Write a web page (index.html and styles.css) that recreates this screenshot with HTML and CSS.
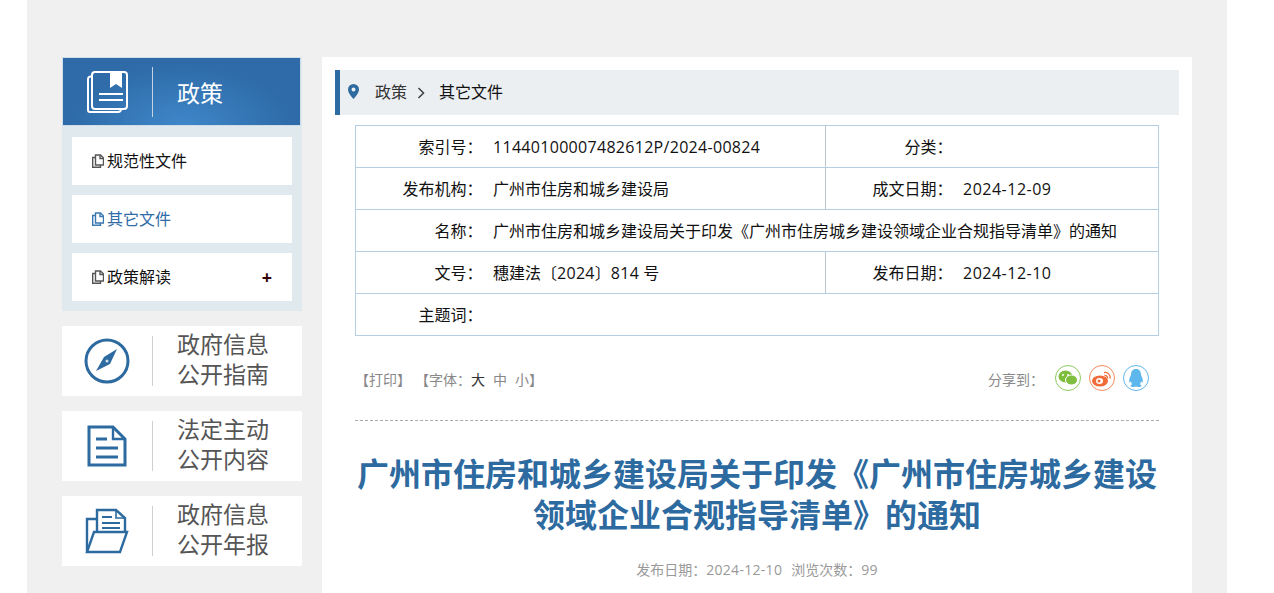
FILE: index.html
```html
<!DOCTYPE html>
<html lang="zh-CN">
<head>
<meta charset="utf-8">
<title>政策</title>
<link rel="stylesheet" href="styles.css">
</head>
<body>
<div class="wrap">
  <aside class="side">
    <div class="menu">
      <div class="menu-head">
        <svg class="head-icon" width="42" height="42" viewBox="0 0 42 42" fill="none" stroke="#fff" stroke-width="2">
          <rect x="5" y="1" width="35" height="37" rx="3"/>
          <path d="M5 5.500H3.500A2.500 2.500 0 0 0 1 8v31a2 2 0 0 0 2 2h28a3 3 0 0 0 3-3"/>
          <path d="M23 1v16l6-4 6 4V1z" fill="#fff" stroke="none"/>
          <path d="M12 23h24M12 29h24"/>
        </svg>
        <span class="vline light"></span>
        <span class="head-title">政策</span>
      </div>
      <ul class="menu-list">
        <li class="menu-item"><svg class="doc" width="12" height="14" viewBox="0 0 12 14"><use href="#doc"/></svg>规范性文件</li>
        <li class="menu-item on"><svg class="doc" width="12" height="14" viewBox="0 0 12 14"><use href="#doc"/></svg>其它文件</li>
        <li class="menu-item"><svg class="doc" width="12" height="14" viewBox="0 0 12 14"><use href="#doc"/></svg>政策解读<b class="plus">+</b></li>
      </ul>
    </div>
    <a class="card">
      <span class="card-icon">
        <svg width="46" height="46" viewBox="0 0 46 46" fill="none"><circle cx="23" cy="23" r="21" stroke="#2d6a9f" stroke-width="3"/><path d="M33 11 26 26 12 33 20 19z" fill="#2d6a9f"/><circle cx="23" cy="23" r="1.500" fill="#cfe0ee"/></svg>
      </span>
      <span class="vline"></span>
      <span class="card-text">政府信息<br>公开指南</span>
    </a>
    <a class="card">
      <span class="card-icon">
        <svg width="40" height="42" viewBox="0 0 40 42" fill="none" stroke="#2d6a9f" stroke-width="3"><path d="M2 2h24l12 12v26H2z"/><path d="M26 2v12h12" stroke-width="2.400"/><path d="M9 14h11M9 23h22M9 32h22"/></svg>
      </span>
      <span class="vline"></span>
      <span class="card-text">法定主动<br>公开内容</span>
    </a>
    <a class="card">
      <span class="card-icon">
        <svg width="44" height="46" viewBox="0 0 44 46" fill="none" stroke="#2d6a9f" stroke-width="2.400"><path d="M12 25V2h19l9 8v15"/><path d="M31 2v8h9" stroke-width="1.600"/><path d="M17 9h10M17 15h18M17 20h18" stroke-width="1.800"/><path d="M12 11H2v33"/><path d="M2 44h33l7-20H9z" fill="#fff"/></svg>
      </span>
      <span class="vline"></span>
      <span class="card-text">政府信息<br>公开年报</span>
    </a>
  </aside>
  <main class="panel">
    <nav class="crumb">
      <svg class="pin" width="11" height="15" viewBox="0 0 11 15"><path d="M5.500 0A5.500 5.500 0 0 0 0 5.500C0 9.500 5.500 15 5.500 15S11 9.500 11 5.500A5.500 5.500 0 0 0 5.500 0zm0 7.500a2 2 0 1 1 0-4 2 2 0 0 1 0 4z" fill="#2d6a9f"/></svg>
      <span class="crumb-a">政策</span>
      <svg class="chev" width="8" height="12" viewBox="0 0 8 12" fill="none" stroke="#444" stroke-width="1.600"><path d="M1.500 1l5 5-5 5"/></svg>
      <span>其它文件</span>
    </nav>
    <div class="article">
      <table class="info">
        <colgroup><col class="c1"><col class="c2"><col class="c3"><col class="c4"></colgroup>
        <tr><th>索引号&#65306;</th><td><span class="num">11440100007482612P/2024-00824</span></td><th>分类&#65306;</th><td></td></tr>
        <tr><th>发布机构&#65306;</th><td>广州市住房和城乡建设局</td><th>成文日期&#65306;</th><td><span class="date">2024-12-09</span></td></tr>
        <tr><th>名称&#65306;</th><td colspan="3">广州市住房和城乡建设局关于印发《广州市住房城乡建设领域企业合规指导清单》的通知</td></tr>
        <tr><th>文号&#65306;</th><td>穗建法〔<span class="num">2024</span>〕<span class="num">814</span> 号</td><th>发布日期&#65306;</th><td><span class="date">2024-12-10</span></td></tr>
        <tr><th>主题词&#65306;</th><td colspan="3"></td></tr>
      </table>
      <div class="tools">
        <div class="print"><span class="print-a">【打印】</span>【字体&#65306;<span class="size dark">大</span><span class="size">中</span><span class="size">小</span>】</div>
        <div class="share">
          <span class="share-label">分享到&#65306;</span>
          <span class="sh wx"><svg width="20" height="16" viewBox="0 0 20 16"><ellipse cx="7.500" cy="6.500" rx="7" ry="6" fill="#7fbd3e"/><ellipse cx="13.500" cy="10" rx="6" ry="5" fill="#7fbd3e" stroke="#fff"/><circle cx="5" cy="5" r="1" fill="#fff"/><circle cx="10" cy="5" r="1" fill="#fff"/></svg></span>
          <span class="sh wb"><svg width="20" height="17" viewBox="0 0 20 17"><ellipse cx="8" cy="11" rx="8" ry="5.500" fill="#f26b3a"/><ellipse cx="7.500" cy="11" rx="3.500" ry="3" fill="#fff"/><circle cx="7" cy="11" r="1.500" fill="#f26b3a"/><path d="M12 2.500a5 5 0 0 1 6 6M12.500 5.500a2.500 2.500 0 0 1 3 3" fill="none" stroke="#f26b3a" stroke-width="1.300"/></svg></span>
          <span class="sh qq"><svg width="16" height="19" viewBox="0 0 16 19"><path d="M8 0c3.500 0 5 2.500 5 5.500 0 1 1 2 1.500 4 .6 2.500.4 4-.3 4-.4 0-1-.8-1.200-1.500 0 1.200-.4 2.500-1.300 3.300 1 .4 1.800 1 1.800 1.700 0 .8-2 1-3.500 1-.8 0-1.500-.2-2-.5-.5.300-1.200.5-2 .5-1.500 0-3.500-.2-3.500-1 0-.7.800-1.300 1.800-1.700C3.400 14.500 3 13.200 3 12c-.2.700-.8 1.500-1.200 1.500-.7 0-.9-1.500-.3-4C2 7.500 3 6.500 3 5.500 3 2.500 4.500 0 8 0z" fill="#5db6ec"/></svg></span>
        </div>
      </div>
      <h1 class="title">广州市住房和城乡建设局关于印发《广州市住房城乡建设领域企业合规指导清单》的通知</h1>
      <p class="meta">发布日期&#65306;<span class="num">2024-12-10</span><span class="views">浏览次数&#65306;<span class="num">99</span></span></p>
    </div>
  </main>
</div>
<svg class="defs" width="0" height="0"><defs><g id="doc" fill="none" stroke="currentColor" stroke-width="1.400"><path d="M3.500 3V1h5l3 3v7h-8z"/><path d="M8 1v3.500h3.500"/><path d="M3 3.500H.7v9.800h7.800V11"/></g></defs></svg>
</body>
</html>
```
FILE: styles.css
```css
* { box-sizing: border-box; }
html, body { margin: 0; height: 593px; overflow: hidden; }
body {
  background: #fff;
  font-family: "Open Sans", "Noto Sans CJK SC", sans-serif;
  font-size: 16px;
  color: #000;
}
.wrap {
  width: 1200px;
  height: 593px;
  margin-left: 27px;
  padding: 57px 35px 0;
  background: #f0f0f0;
  display: flex;
  gap: 20px;
  align-items: flex-start;
}
.side { width: 240px; flex: none; display: flex; flex-direction: column; gap: 15px; }
.menu { background: #dfe9ee; }
.menu-head {
  height: 69px;
  width: 239px;
  border: 1px solid #cfdde8;
  background: radial-gradient(ellipse 110px 60px at 50% 100%, #3f87c9 0%, #2e6ba8 100%);
  display: flex;
  align-items: center;
  padding-left: 24px;
}
.head-icon { flex: none; }
.vline { flex: none; width: 1px; height: 50px; background: #cfcfcf; }
.menu-head .vline { margin-left: 23px; background: #c3d3e3; }
.head-title { margin-left: 24px; padding-top: 3px; color: #fff; font-size: 23px; line-height: 30px; }
.menu-list { list-style: none; margin: 0; padding: 11px 10px 10px; display: flex; flex-direction: column; gap: 10px; }
.menu-item {
  height: 48px;
  background: #fff;
  display: flex;
  align-items: center;
  padding-left: 20px;
  color: #111;
  line-height: 24px;
}
.menu-item.on { color: #2f6ca8; }
.menu-item .doc { color: #555; margin-right: 3px; flex: none; }
.menu-item.on .doc { color: #3a78b0; }
.plus { margin-left: auto; margin-right: 20px; font-size: 18px; line-height: 18px; color: #300; }
.card { height: 70px; background: #fff; display: flex; align-items: center; color: #555; }
.card-icon { width: 90px; flex: none; display: flex; justify-content: center; }
.card-text { margin-left: 24px; padding-bottom: 4px; font-size: 23px; line-height: 30px; }
.panel { width: 870px; flex: none; height: 536px; background: #fff; padding: 13px 13px 0; }
.crumb {
  height: 45px;
  background: #eceff2;
  border-left: 5px solid #2d6ca2;
  display: flex;
  align-items: center;
  padding: 0 0 2px 8px;
  color: #111;
  line-height: 24px;
}
.crumb-a { margin-left: 16px; color: #333; }
.chev { margin: 2px 14px 0 10px; }
.pin { flex: none; }
.article { padding: 10px 20px 0; }
.info { width: 803px; height: 211px; border-collapse: collapse; table-layout: fixed; }
.c1 { width: 135px; } .c2 { width: 335px; } .c3 { width: 135px; } .c4 { width: 198px; }
.info th, .info td { height: 42px; border: 1px solid #b5cee3; padding: 0; font-weight: 400; line-height: 24px; white-space: nowrap; color: #111; }
.info th { text-align: right; padding-right: 8px; border-right: 0; }
.info td { text-align: left; padding-left: 2.5px; border-left: 0; }
.info td + th { border-left: 1px solid #b8c6d2; }
.info td:has(+ th) { border-right: 1px solid #b8c6d2; }
.num { letter-spacing: .3px; }
.date { letter-spacing: .5px; }
.tools {
  height: 85px;
  border-bottom: 1px dashed #aaa;
  display: flex;
  justify-content: space-between;
  align-items: center;
  padding-top: 4px;
  color: #888;
  font-size: 14px;
  line-height: 20px;
}
.print-a { margin-right: 11px; }
.size { margin-right: 8px; }
.size:last-of-type { margin-right: 0; }
.size.dark { color: #333; }
.share { display: flex; align-items: center; padding: 0 10px 4px 0; }
.share-label { margin-right: 11px; padding-top: 4px; }
.sh { width: 26px; height: 26px; border-radius: 50%; border: 1px solid; display: flex; align-items: center; justify-content: center; margin-left: 8px; }
.share-label + .sh { margin-left: 0; }
.wx { border-color: #8ccb5e; }
.wb { border-color: #f58a5e; }
.qq { border-color: #62b6ec; }
.title { margin: 32px 0 0; color: #2d6a9f; font-size: 32px; line-height: 41px; font-weight: 700; text-align: center; }
.meta { margin: 25px 0 0; color: #999; font-size: 14px; line-height: 20px; text-align: center; }
.views { margin-left: 9px; }
.defs { position: absolute; }
```
